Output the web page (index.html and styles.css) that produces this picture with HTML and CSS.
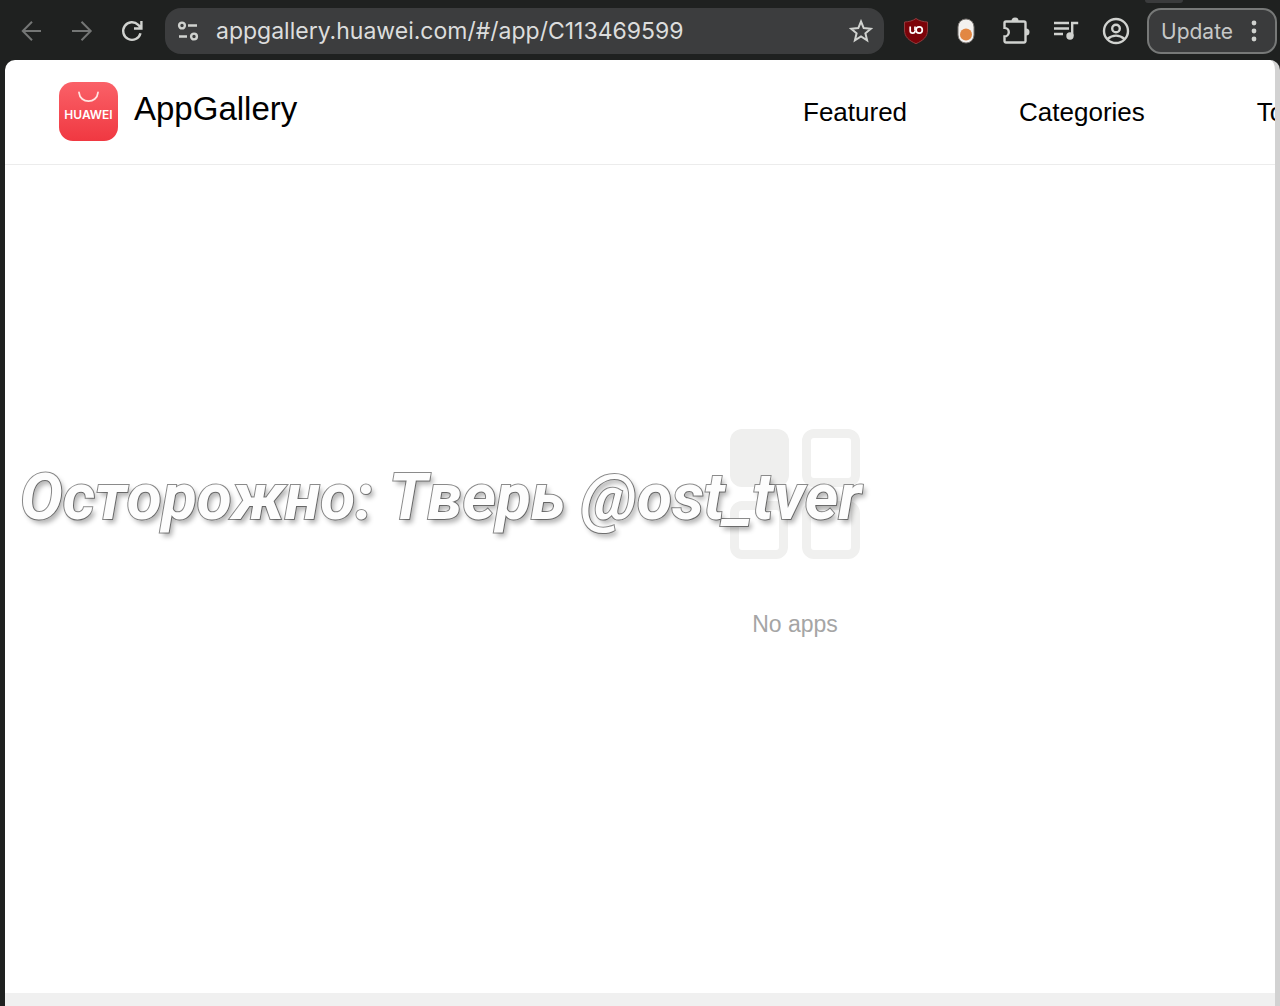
FILE: index.html
```html
<!DOCTYPE html>
<html lang="en">
<head>
  <meta charset="UTF-8">
  <meta name="viewport" content="width=device-width, initial-scale=1.0">
  <title>AppGallery</title>
  <link rel="stylesheet" href="styles.css">
</head>
<body>
  <div class="toolbar">
    <button class="tool off" aria-label="Back">
      <svg width="24" height="24" viewBox="0 0 24 24"><path d="M22 12H4M13 2.800L3.800 12l9.200 9.200"/></svg>
    </button>
    <button class="tool off" aria-label="Forward">
      <svg width="24" height="24" viewBox="0 0 24 24"><path d="M3 12h18M12.500 2.800L21.700 12l-9.200 9.200"/></svg>
    </button>
    <button class="tool" aria-label="Reload">
      <svg width="24" height="24" viewBox="0 0 24 24"><path d="M21.500 14.200a8.800 8.800 0 1 1-2.300-8.400l2.300 2.400M22.400 2v7.500H15"/></svg>
    </button>
    <div class="address">
      <button class="site-info" aria-label="Site information">
        <svg width="24" height="24" viewBox="0 0 24 24"><circle cx="6" cy="6.500" r="2.900"/><path d="M12 6.500h9M3 17.500h8"/><circle cx="18" cy="17.500" r="2.900"/></svg>
      </button>
      <input class="url" type="text" aria-label="Address" value="appgallery.huawei.com/#/app/C113469599">
      <button class="bookmark" aria-label="Bookmark">
        <svg width="24" height="24" viewBox="0 0 24 24"><path d="M12 2.500l2.700 6.600 7.100.600-5.400 4.600 1.700 7-6.100-3.800-6.100 3.800 1.700-7-5.400-4.600 7.100-.600z"/></svg>
      </button>
    </div>
    <div class="extensions">
      <button class="tool" aria-label="uBlock Origin">
        <svg width="26" height="28" viewBox="0 0 26 28">
          <path d="M13 1.500c3 2.200 7 3.300 11.500 3.500v8c0 7-4.500 10.500-11.500 13.700C6 23.500 1.500 20 1.500 13V5C6 4.800 10 3.700 13 1.500z" fill="#7c0309" stroke="#8f3c3e" stroke-width="1"/>
          <path d="M7.200 9.500v4.300a2.400 2.400 0 0 0 4.800 0" stroke="#fff" stroke-width="1.700"/>
          <path d="M12 9.500v4" stroke="#fff" stroke-width="1.700"/>
          <circle cx="16.200" cy="13" r="3.100" stroke="#fff" stroke-width="1.700"/>
        </svg>
      </button>
      <button class="tool" aria-label="Extension">
        <svg width="18" height="26" viewBox="0 0 18 26">
          <rect x="1" y="1" width="16" height="24" rx="8" fill="#f3f1ef" stroke="#77736f" stroke-width="1"/>
          <circle cx="9" cy="16.500" r="6" fill="#e28743" stroke="none"/>
        </svg>
      </button>
      <button class="tool" aria-label="Extensions">
        <svg width="28" height="30" viewBox="0 0 28 30">
          <path d="M4 5.500h18a1.500 1.500 0 0 1 1.500 1.500v18a1.500 1.500 0 0 1-1.500 1.500H4A1.500 1.500 0 0 1 2.500 25v-4.500a4.300 4.300 0 0 0 0-8.600V7A1.500 1.500 0 0 1 4 5.500z"/>
          <path d="M9.500 5a3.500 3.500 0 0 1 7 0zM24 12.500a3.500 3.500 0 0 1 0 7z" fill="#d0d2cf" stroke="none"/>
        </svg>
      </button>
      <button class="tool" aria-label="Media controls">
        <svg width="26" height="24" viewBox="0 0 26 24">
          <path d="M1 4h15M1 9.500h15M1 15h9M19.200 17V4h6"/>
          <circle cx="17" cy="17" r="3.700" fill="#d0d2cf" stroke="none"/>
        </svg>
      </button>
      <button class="tool" aria-label="Profile">
        <svg width="28" height="28" viewBox="0 0 28 28">
          <circle cx="14" cy="14" r="12"/><circle cx="14" cy="11.500" r="3.800"/>
          <path d="M5.500 22c5-4.500 12-4.500 17 0"/>
        </svg>
      </button>
    </div>
    <button class="update">Update
      <svg width="6" height="22" viewBox="0 0 6 22"><circle cx="3" cy="3" r="2.400"/><circle cx="3" cy="11" r="2.400"/><circle cx="3" cy="19" r="2.400"/></svg>
    </button>
  </div>

  <div class="window">
    <div class="page">
      <header class="header">
        <a class="brand" href="#">
          <svg width="60" height="60" viewBox="0 0 60 60">
            <defs>
              <linearGradient id="red" x1="0" y1="0" x2="0" y2="1">
                <stop offset="0" stop-color="#fa6168"/>
                <stop offset="1" stop-color="#f03841"/>
              </linearGradient>
            </defs>
            <rect x="0" y="0" width="59" height="59" rx="14" fill="url(#red)"/>
            <path d="M20 10.500c1 11.500 18 11.500 19 0" fill="none" stroke="#ffe4e1" stroke-width="1.800" stroke-linecap="round"/>
            <text class="logo-text" x="29.500" y="37" text-anchor="middle">HUAWEI</text>
          </svg>
          <span class="brand-name">AppGallery</span>
        </a>
        <nav class="nav">
          <a href="#">Featured</a>
          <a href="#">Categories</a>
          <a href="#">Top</a>
        </nav>
      </header>
      <main class="empty">
        <svg width="132" height="132" viewBox="0 0 132 132">
          <rect x="1" y="1" width="59" height="58" rx="12" fill="#efefee"/>
          <path d="M85 1h34a12 12 0 0 1 12 12v34a12 12 0 0 1-12 12H85a12 12 0 0 1-12-12V13A12 12 0 0 1 85 1zm0 9a3 3 0 0 0-3 3v34a3 3 0 0 0 3 3h34a3 3 0 0 0 3-3V13a3 3 0 0 0-3-3zM13 73h34a12 12 0 0 1 12 12v34a12 12 0 0 1-12 12H13a12 12 0 0 1-12-12V85a12 12 0 0 1 12-12zm0 9a3 3 0 0 0-3 3v34a3 3 0 0 0 3 3h34a3 3 0 0 0 3-3V85a3 3 0 0 0-3-3zM85 73h34a12 12 0 0 1 12 12v34a12 12 0 0 1-12 12H85a12 12 0 0 1-12-12V85a12 12 0 0 1 12-12zm0 9a3 3 0 0 0-3 3v34a3 3 0 0 0 3 3h34a3 3 0 0 0 3-3V85a3 3 0 0 0-3-3z" fill="#f0f0ef"/>
        </svg>
        <p>No apps</p>
      </main>
      <footer class="footer"></footer>
    </div>
  </div>
  <div class="watermark">Осторожно: Тверь @ost_tver</div>
</body>
</html>
```
FILE: styles.css
```css
* {
  box-sizing: border-box;
}
body {
  margin: 0;
  height: 100vh;
  display: flex;
  flex-direction: column;
  position: relative;
  overflow: hidden;
  background: #1f2120;
  font-family: "Liberation Sans", Arial, sans-serif;
}
button {
  padding: 0;
  border: none;
  background: none;
  cursor: pointer;
}

/* browser toolbar */
.toolbar {
  display: flex;
  align-items: center;
  position: relative;
  padding: 8px 3px 6px 6px;
}
/* bottom edge of the tab strip button */
.toolbar::before {
  content: "";
  position: absolute;
  top: 0;
  right: 97px;
  width: 38px;
  height: 3px;
  border-radius: 0 0 8px 8px;
  background: #3a3b3c;
}
.toolbar svg {
  display: block;
  fill: none;
  stroke: #d0d2cf;
  stroke-width: 2.4;
}
.tool {
  width: 50px;
  height: 46px;
  display: flex;
  justify-content: center;
  align-items: center;
}
.toolbar .off svg {
  stroke: #747675;
  stroke-width: 2;
}
.address {
  flex: 1;
  min-width: 0;
  height: 46px;
  margin: 0 7px 0 9px;
  padding: 0 11px;
  display: flex;
  align-items: center;
  border-radius: 16px;
  background: #3c3d3e;
}
.url {
  flex: 1;
  min-width: 0;
  margin-left: 16px;
  padding: 0;
  border: none;
  outline: none;
  background: none;
  color: #dcdddd;
  font-family: Inter, sans-serif;
  font-size: 23px;
}
.toolbar .bookmark svg {
  stroke-width: 2;
}
.extensions {
  display: flex;
}
.update {
  width: 130px;
  height: 46px;
  margin-left: 6px;
  padding: 0 12px;
  display: flex;
  align-items: center;
  gap: 18px;
  border: 2px solid #777978;
  border-radius: 14px;
  background: #3a3b3c;
  color: #c6c8c7;
  font-family: Inter, sans-serif;
  font-size: 21px;
}
.toolbar .update svg {
  fill: #d0d2cf;
  stroke: none;
}

/* web page */
.window {
  flex: 1;
  min-height: 0;
  margin-left: 5px;
  overflow: hidden;
  border-right: 5px solid #d2d2d2;
  border-radius: 10px 10px 0 0;
  background: #fff;
}
.page {
  min-width: 1580px;
  height: 100%;
  display: flex;
  flex-direction: column;
}
.header {
  height: 105px;
  display: flex;
  align-items: center;
  padding: 0 54px;
  border-bottom: 1px solid #ececec;
}
.brand {
  width: 744px;
  display: flex;
  gap: 15px;
  color: #000;
  text-decoration: none;
}
.brand-name {
  font-size: 33px;
  line-height: 54px;
}
.logo-text {
  fill: #fff;
  font-family: Inter, sans-serif;
  font-size: 12px;
  font-weight: 600;
}
.nav {
  display: flex;
  gap: 112px;
}
.nav a {
  color: #000;
  font-size: 26px;
  line-height: 30px;
  text-decoration: none;
}
.empty {
  flex: 1;
  display: flex;
  flex-direction: column;
  justify-content: center;
  align-items: center;
  padding-bottom: 92px;
}
.empty p {
  margin: 50px 0 0;
  color: #a5a5a5;
  font-size: 23px;
  line-height: 28px;
}
.footer {
  height: 13px;
  background: #f0f0f0;
}

/* channel name over the page */
.watermark {
  position: absolute;
  top: 460px;
  left: 20px;
  color: #fdfdfd;
  font-family: Roboto, sans-serif;
  font-size: 64px;
  font-style: italic;
  font-weight: 700;
  font-kerning: none;
  line-height: 76px;
  white-space: nowrap;
  -webkit-text-stroke: 2px #8c8c8c;
  paint-order: stroke fill;
  text-shadow: 3px 4px 5px rgba(0, 0, 0, 0.3);
  pointer-events: none;
}
```
